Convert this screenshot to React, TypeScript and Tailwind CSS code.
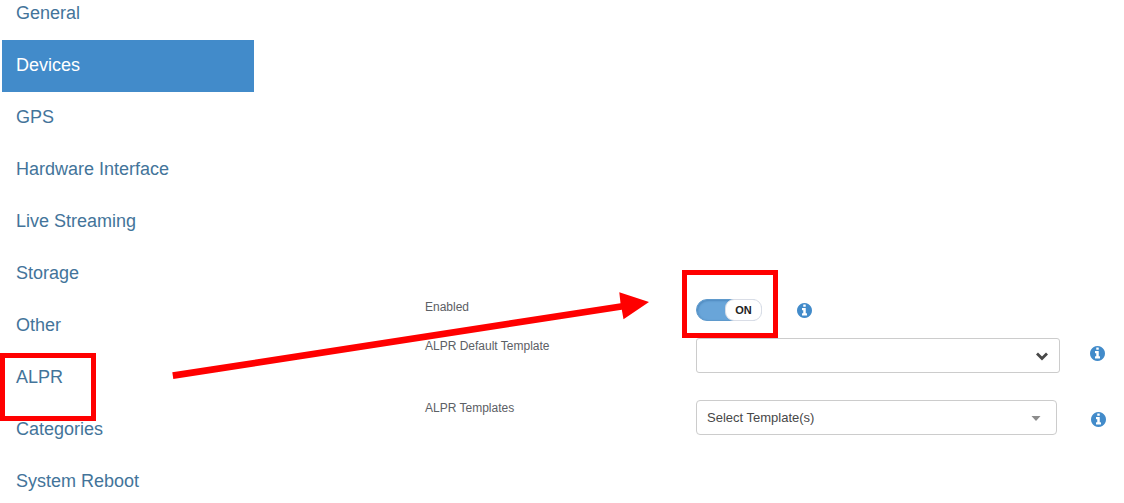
import React, { useState } from 'react';

const menuItems = [
  'General',
  'Devices',
  'GPS',
  'Hardware Interface',
  'Live Streaming',
  'Storage',
  'Other',
  'ALPR',
  'Categories',
  'System Reboot',
];

const InfoButton: React.FC<{ label: string }> = ({ label }) => (
  <button type="button" aria-label={label} className="text-[#428bca]">
    <svg viewBox="0 128 1536 1536" className="size-[15px]" fill="currentColor">
      <path d="M1024 1376v-160q0-14-9-23t-23-9h-96v-512q0-14-9-23t-23-9h-320q-14 0-23 9t-9 23v160q0 14 9 23t23 9h96v320h-96q-14 0-23 9t-9 23v160q0 14 9 23t23 9h448q14 0 23-9t9-23zm-128-896v-160q0-14-9-23t-23-9h-192q-14 0-23 9t-9 23v160q0 14 9 23t23 9h192q14 0 23-9t9-23zm640 416q0 209-103 385.5t-279.5 279.5-385.5 103-385.5-103-279.5-279.5-103-385.5 103-385.5 279.5-279.5 385.5-103 385.5 103 279.5 279.5 103 385.5z" />
    </svg>
  </button>
);

const AlprSettings: React.FC = () => {
  const [active, setActive] = useState('Devices');
  const [enabled, setEnabled] = useState(true);

  return (
    <div className="relative flex bg-white font-['Liberation_Sans',Arial,sans-serif]">
      {/* Sidebar */}
      <nav className="-mt-3 w-64 shrink-0 px-0.5 text-lg">
        <ul>
          {menuItems.map((item) => (
            <li key={item} className="relative">
              <a
                href="#"
                onClick={() => setActive(item)}
                className={`flex h-[52px] items-center px-3.5 pb-0.5 ${
                  active === item ? 'bg-[#428bca] text-white' : 'text-[#43749a]'
                }`}
              >
                {item}
              </a>
              {item === 'ALPR' && (
                <span className="pointer-events-none absolute top-px -left-0.5 z-10 h-[68px] w-24 border-5 border-[#ff0000]" />
              )}
            </li>
          ))}
        </ul>
      </nav>

      {/* ALPR form */}
      <form className="flex-1 pt-[299px] pl-[169px] text-xs text-[#5c6065]">
        <div className="flex items-start">
          <label htmlFor="enabled" className="w-[271px] shrink-0">
            Enabled
          </label>
          <div className="flex items-center gap-[35px]">
            <div className="relative h-[22px] w-[66px]">
              <input
                id="enabled"
                type="checkbox"
                role="switch"
                checked={enabled}
                onChange={() => setEnabled(!enabled)}
                className="block h-full w-full appearance-none rounded-full border border-[#d5dae2] bg-gray-200 checked:border-[#5f9acc] checked:bg-[#69a5d9] checked:shadow-[inset_1px_1px_2px_#4f8abf]"
              />
              <span
                className={`pointer-events-none absolute inset-y-0 flex w-[37px] items-center justify-center rounded-[9px] border border-[#d9dde6] bg-white text-[11px] font-bold text-[#222] ${
                  enabled ? 'right-0' : 'left-0'
                }`}
              >
                {enabled ? 'ON' : 'OFF'}
              </span>
              <span className="pointer-events-none absolute -top-[29px] -left-3.5 z-10 h-[68px] w-24 border-5 border-[#ff0000]" />
            </div>
            <InfoButton label="About Enabled" />
          </div>
        </div>

        <div className="mt-[17px] flex items-start">
          <label htmlFor="default-template" className="w-[271px] shrink-0">
            ALPR Default Template
          </label>
          <div className="relative flex-1">
            <select
              id="default-template"
              className="block h-[35px] w-full appearance-none rounded-[3px] border border-[#ccc] bg-white px-2.5 text-[13px]"
            >
              <option value=""></option>
            </select>
            <svg
              viewBox="0 0 12 9"
              className="pointer-events-none absolute top-3.5 right-3 h-[9px] w-3"
              fill="none"
              stroke="#484848"
              strokeWidth="2.8"
            >
              <path d="M1 1.5 6 6.5 11 1.5" />
            </svg>
          </div>
          <div className="flex h-[30px] w-16 shrink-0 items-center pl-[30px]">
            <InfoButton label="About ALPR Default Template" />
          </div>
        </div>

        <div className="mt-[27px] flex items-start">
          <label htmlFor="templates" className="w-[271px] shrink-0">
            ALPR Templates
          </label>
          <div className="relative flex-1">
            <select
              id="templates"
              className="block h-[35px] w-full appearance-none rounded border border-[#ccc] bg-white px-2.5 text-[13px] text-[#484848]"
            >
              <option>Select Template(s)</option>
            </select>
            <svg
              viewBox="0 0 10 5"
              className="pointer-events-none absolute top-4 right-4 h-[5px] w-2.5"
              fill="#8c8c8c"
            >
              <path d="M0.5 0h9L5 5z" />
            </svg>
          </div>
          <div className="flex h-[38px] w-[67px] shrink-0 items-center pl-[34px]">
            <InfoButton label="About ALPR Templates" />
          </div>
        </div>
      </form>

      {/* Arrow from the ALPR menu entry to the switch */}
      <svg
        viewBox="0 0 478 88"
        className="pointer-events-none absolute top-[292px] left-[172px] h-[88px] w-[478px]"
        fill="#ff0000"
      >
        <path d="M0.3 80.3 448.5 11.2 447.3 0.3 477 10 451.5 27.3 449.8 17.7 1.3 87z" />
      </svg>
    </div>
  );
};

export default AlprSettings;
